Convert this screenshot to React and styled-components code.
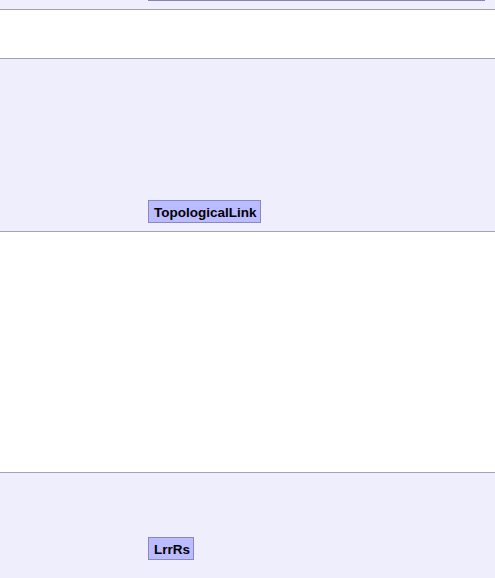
import React from "react";
import styled, { createGlobalStyle } from "styled-components";

const GlobalStyle = createGlobalStyle`
  html, body {
    margin: 0;
    padding: 0;
    background: #ffffff;
    font-family: "Liberation Sans", Arial, sans-serif;
  }
`;

const rows = [
  { shade: true, height: 9, cut: true },
  { shade: false, height: 48 },
  { shade: true, height: 172, badge: "TopologicalLink" },
  { shade: false, height: 240 },
  { shade: true, height: 105, badge: "LrrRs", pad: 18 },
];

const App = () => {
  return (
    <>
      <GlobalStyle />
      <Page>
        {rows.map((r, i) => (
          <Row key={i} $shade={r.shade} $height={r.height} $last={i === rows.length - 1}>
            <Label />
            <Cell $pad={r.pad}>
              {r.cut && <CutEdge />}
              {r.badge && <Badge>{r.badge}</Badge>}
            </Cell>
          </Row>
        ))}
      </Page>
    </>
  );
};

const Page = styled.div`
  width: 495px;
  height: 578px;
  overflow: hidden;
`;

const Row = styled.div`
  display: grid;
  grid-template-columns: 148px 1fr;
  height: ${(p) => p.$height}px;
  background: ${(p) => (p.$shade ? "#eeeefd" : "#ffffff")};
  border-bottom: ${(p) => (p.$last ? "none" : "1px solid #a3a3ad")};
`;

const Label = styled.div``;

const Cell = styled.div`
  display: flex;
  flex-direction: column;
  justify-content: flex-end;
  align-items: flex-start;
  padding-bottom: ${(p) => (p.$pad !== undefined ? p.$pad : 8)}px;
  position: relative;
`;

const CutEdge = styled.div`
  position: absolute;
  top: 0;
  left: 0;
  width: 337px;
  height: 1px;
  background: #8585bb;
`;

const Badge = styled.div`
  box-sizing: border-box;
  height: 23px;
  padding: 1px 3px 0 5px;
  display: flex;
  align-items: center;
  background: #bbbbff;
  border: 1px solid #8888bb;
  font-family: "Liberation Sans", Arial, sans-serif;
  font-weight: bold;
  font-size: 13.5px;
  color: #000000;
`;

export default App;
